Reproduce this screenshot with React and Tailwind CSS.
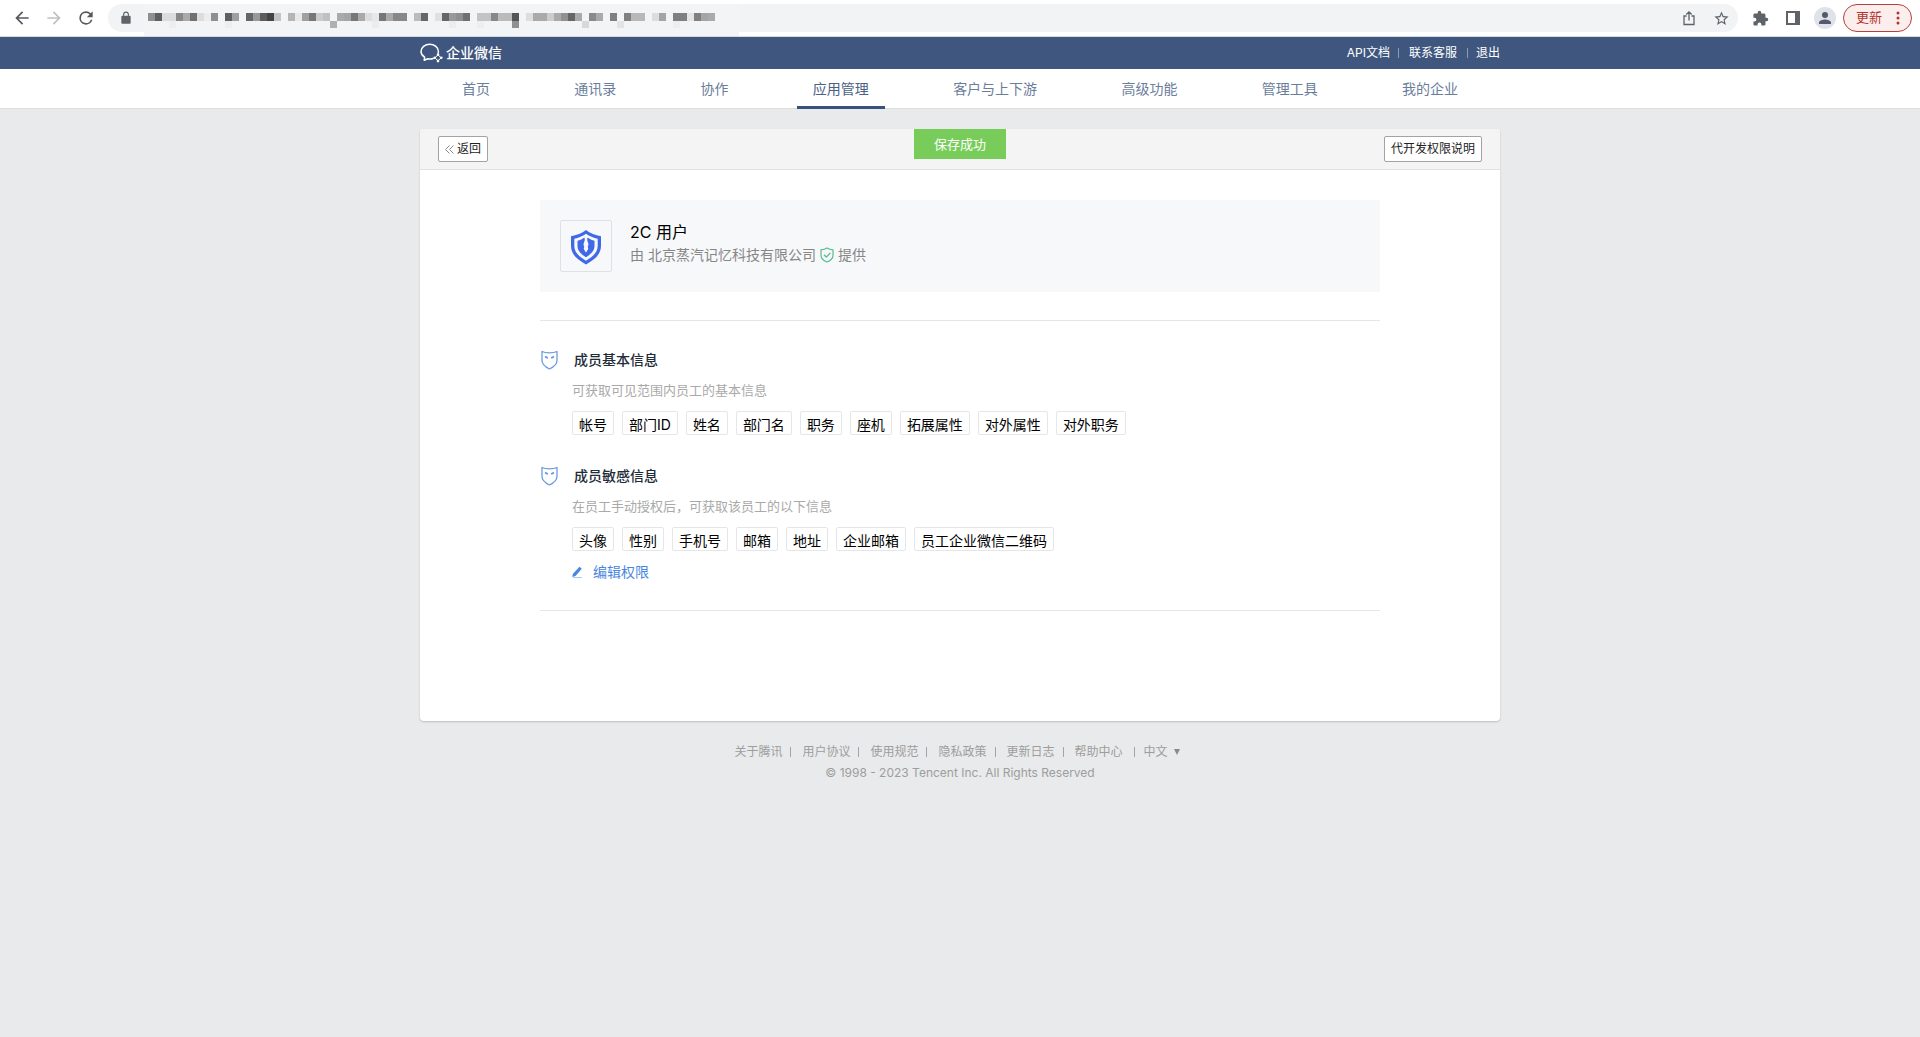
import { useState } from "react";

const URL_ROW =
  "8f 5e dc dc 88 aa 70 dd ed 8f .. 60 a0 .. 66 99 5c 44 c4 .. b5 e8 a0 77 cc c0 .. aa a5 77 aa dd e8 77 aa 88 88 .. bb 66 .. e0 66 99 8f 70 .. c4 c4 88 bb bb 55 .. dd aa aa cc aa 90 66 aa .. 8a aa .. 80 .. 80 b8 b8 .. dd a5 .. 80 80 e4 80 a5 aa".split(" ");
const URL_LOWER = { 3: "ee", 11: "ee", 26: "b0", 32: "ec", 43: "ed", 47: "ee", 52: "90", 62: "d8", 67: "e4", 75: "ee" };

const NAV = ["首页", "通讯录", "协作", "应用管理", "客户与上下游", "高级功能", "管理工具", "我的企业"];

const SECTIONS = [
  {
    title: "成员基本信息",
    desc: "可获取可见范围内员工的基本信息",
    tags: ["帐号", "部门ID", "姓名", "部门名", "职务", "座机", "拓展属性", "对外属性", "对外职务"],
  },
  {
    title: "成员敏感信息",
    desc: "在员工手动授权后，可获取该员工的以下信息",
    tags: ["头像", "性别", "手机号", "邮箱", "地址", "企业邮箱", "员工企业微信二维码"],
    editable: true,
  },
];

const FOOTER = ["关于腾讯", "用户协议", "使用规范", "隐私政策", "更新日志", "帮助中心"];

function MaskedUrl() {
  return (
    <svg width="567" height="15" viewBox="0 0 567 15" shapeRendering="crispEdges" aria-hidden="true">
      {URL_ROW.map((c, i) =>
        c === ".." ? null : <rect key={i} x={i * 7} y="0" width="7" height="8" fill={`#${c}${c}${c}`} />
      )}
      {Object.entries(URL_LOWER).map(([i, c]) => (
        <rect key={i} x={i * 7} y="8" width="7" height="7" fill={`#${c}${c}${c}`} />
      ))}
    </svg>
  );
}

function Glyph({ d, size = 18, className = "text-[#5f6368]" }) {
  return (
    <svg width={size} height={size} viewBox="0 0 24 24" fill="currentColor" className={className} aria-hidden="true">
      <path d={d} />
    </svg>
  );
}

function BrowserBar() {
  return (
    <div className="flex h-[37px] items-center border-b border-[#d5dbe3] bg-white pr-2 pl-3">
      <button aria-label="后退" className="mr-3 flex">
        <Glyph size={20} className="text-[#55585c]" d="M20 11H7.8l5.6-5.6L12 4l-8 8 8 8 1.4-1.4L7.8 13H20z" />
      </button>
      <button aria-label="前进" className="mr-3 flex">
        <Glyph size={20} className="text-[#bfc1c4]" d="M4 11h12.2l-5.6-5.6L12 4l8 8-8 8-1.4-1.4 5.6-5.6H4z" />
      </button>
      <button aria-label="刷新" className="mr-3 flex">
        <Glyph
          size={20}
          className="text-[#55585c]"
          d="M17.65 6.35A7.96 7.96 0 0 0 12 4a8 8 0 1 0 7.73 10h-2.08A6 6 0 1 1 12 6c1.66 0 3.14.69 4.22 1.78L13 11h7V4z"
        />
      </button>
      <div className="flex h-7 flex-1 items-center rounded-full bg-[#f1f3f4] pr-2 pl-[11px]">
        <Glyph
          size={14}
          d="M18 8h-1V6A5 5 0 0 0 7 6v2H6a2 2 0 0 0-2 2v10c0 1.100.9 2 2 2h12a2 2 0 0 0 2-2V10a2 2 0 0 0-2-2zM8.900 6a3.100 3.100 0 0 1 6.200 0v2H8.900z"
        />
        <div className="mr-auto ml-[11px] h-8 w-[595px] self-start bg-[#f3f4f5] pt-[9px] pl-1">
          <MaskedUrl />
        </div>
        <button aria-label="分享" className="mr-4 flex">
          <svg width="16" height="16" viewBox="0 0 16 16" fill="none" stroke="#5f6368" strokeWidth="1.3" aria-hidden="true">
            <path d="M5.500 6H3v8.500h10V6h-2.500M8 10.500V2M5.300 4.500L8 1.800l2.700 2.700" />
          </svg>
        </button>
        <button aria-label="收藏" className="flex">
          <Glyph
            size={17}
            d="M22 9.240l-7.190-.62L12 2 9.190 8.630 2 9.240l5.460 4.730L5.820 21 12 17.270 18.180 21l-1.630-7.030zM12 15.400l-3.760 2.270 1-4.280-3.320-2.880 4.380-.38L12 6.100l1.710 4.040 4.380.38-3.320 2.880 1 4.280z"
          />
        </button>
      </div>
      <button aria-label="扩展程序" className="ml-3.5 flex">
        <Glyph
          size={17}
          d="M20.500 11H19V7a2 2 0 0 0-2-2h-4V3.500a2.500 2.500 0 0 0-5 0V5H4a2 2 0 0 0-2 2v3.800h1.500a2.700 2.700 0 0 1 0 5.400H2V20a2 2 0 0 0 2 2h3.800v-1.500a2.700 2.700 0 0 1 5.400 0V22H17a2 2 0 0 0 2-2v-4h1.500a2.500 2.500 0 0 0 0-5z"
        />
      </button>
      <button aria-label="侧边栏" className="ml-4 flex">
        <svg width="16" height="16" viewBox="0 0 16 16" aria-hidden="true">
          <path fill="#5f6368" fillRule="evenodd" d="M1 1h14v14H1zM3 3v10h7V3z" />
        </svg>
      </button>
      <button aria-label="个人资料" className="ml-[13px] flex size-[22px] items-center justify-center rounded-full bg-[#dfe2e8]">
        <Glyph
          size={18}
          className="text-[#535b6b]"
          d="M12 12a4 4 0 1 0 0-8 4 4 0 0 0 0 8zm0 2c-2.670 0-8 1.340-8 4v2h16v-2c0-2.660-5.330-4-8-4z"
        />
      </button>
      <button className="ml-[7px] flex h-7 w-[69px] items-center justify-between rounded-full border border-[#b3403a] bg-[#fceeed] pr-[11px] pl-3 text-[13px] text-[#b3342e]">
        更新
        <svg width="4" height="14" viewBox="0 0 4 14" fill="#b3342e" aria-hidden="true">
          <circle cx="2" cy="2" r="1.500" />
          <circle cx="2" cy="7" r="1.500" />
          <circle cx="2" cy="12" r="1.500" />
        </svg>
      </button>
    </div>
  );
}

function WeComLogo() {
  return (
    <svg width="24" height="20" viewBox="0 0 24 20" fill="none" stroke="#fff" aria-hidden="true">
      <path
        strokeWidth="1.500"
        strokeLinejoin="round"
        strokeLinecap="round"
        d="M13.200 15.500c-1.500.5-3.700.7-5.400.2L4.200 17.300l.4-3.100C2.400 12.700 1 10.700 1 8.400 1 4.400 4.900 1.300 9.700 1.300s8.700 3.100 8.700 7.100c0 .7-.1 1.300-.3 1.900"
      />
      <path strokeWidth="1" d="M18 11.800l3 3-3 3-3-3z" />
      <g fill="#fff" stroke="none">
        <circle cx="18" cy="11.800" r="1.300" />
        <circle cx="21.300" cy="14.800" r="1.300" />
        <circle cx="18" cy="18.100" r="1.300" />
        <circle cx="14.700" cy="14.800" r="1.300" />
      </g>
    </svg>
  );
}

function MaskIcon() {
  return (
    <svg width="18" height="20" viewBox="0 0 18 20" fill="none" stroke="#6d9ae0" strokeWidth="1.300" strokeLinejoin="round" aria-hidden="true">
      <path d="M2 1.500c2.300 1.200 4.800 1.400 7.500 1.400s5.200-.2 7.500-1.400v8.800c0 4-3.500 6.800-7.500 8.700C5.500 17.100 2 14.300 2 10.300z" />
      <path strokeWidth="1.800" d="M5 6.500l2.800 1.600M14 6.500l-2.800 1.600" />
    </svg>
  );
}

function AppShield() {
  return (
    <svg width="32" height="36" viewBox="0 0 32 36" aria-hidden="true">
      <path
        d="M16 1C12 4 6.500 6.500 1 7.200V17c0 8 6 13.500 15 18.500 9-5 15-10.500 15-18.500V7.200C25.500 6.500 20 4 16 1z"
        fill="#4168e8"
      />
      <path
        d="M16 4.800c-3.500 2.400-7.500 4.200-11.700 5V17c0 6.300 4.700 10.500 11.700 14.700 7-4.200 11.700-8.400 11.700-14.700V9.800c-4.200-.8-8.200-2.600-11.700-5z"
        fill="#f7f8fa"
      />
      <path
        d="M14.300 8.500c-1.500 1.300-4.500 2.700-6.800 3.300V17c0 4.700 3.600 8 8.500 11.300 4.900-3.300 8.500-6.600 8.500-11.300v-5.200c-2.300-.6-5.300-2-6.800-3.300-.9 1.800-.4 3.600.4 5.200.7 1.500.3 3-.6 4.200.6 1 .6 2.200-.2 3.100L16 23l-1.300-2c-.8-.9-.8-2.100-.2-3.100-.9-1.200-1.300-2.700-.6-4.200.8-1.600 1.300-3.400.4-5.200z"
        fill="#4168e8"
      />
      <path d="M16 14.500l-2.300 5.200L16 23.500l2.300-3.800z" fill="#f7f8fa" />
    </svg>
  );
}

export default function App() {
  const [active, setActive] = useState("应用管理");
  return (
    <div className="min-h-screen bg-[#e9eaeb] font-[Inter,'Noto_Sans_CJK_SC',sans-serif]">
      <BrowserBar />
      <header>
        <div className="bg-[#3f577f]">
          <div className="mx-auto flex h-8 max-w-[1080px] items-center justify-between text-white">
            <a href="#" className="flex items-center gap-0.5 text-sm leading-5 font-medium">
              <WeComLogo />
              企业微信
            </a>
            <div className="flex items-center gap-2 text-xs">
              <a href="#">API文档</a>
              <span className="h-2.5 w-px bg-[#8c9ab2]" />
              <a href="#" className="ml-0.5">联系客服</a>
              <span className="ml-0.5 h-2.5 w-px bg-[#8c9ab2]" />
              <a href="#">退出</a>
            </div>
          </div>
        </div>
        <div className="border-b border-[#dcdddf] bg-white">
          <nav className="mx-auto -mb-px flex h-10 max-w-[1080px] justify-between px-[26px] text-sm leading-10">
            {NAV.map((n) => (
              <a
                key={n}
                href="#"
                onClick={() => setActive(n)}
                className={
                  n === active ? "border-b-3 border-[#39527c] px-4 text-[#4a6186]" : "px-4 text-[#6a7d9b]"
                }
              >
                {n}
              </a>
            ))}
          </nav>
        </div>
      </header>

      <main className="mx-auto mt-5 max-w-[1080px] rounded bg-white pb-[110px] shadow-[0_1px_2px_rgba(0,0,0,0.2)]">
        <div className="relative flex h-[41px] items-center justify-between rounded-t border-b border-[#e1e2e3] bg-[#f4f4f4] px-[18px] text-xs text-[#222]">
          <button className="flex h-[26px] items-center gap-[3px] rounded-xs border border-[#a3a3a3] bg-white px-1.5">
            <svg width="9" height="9" viewBox="0 0 9 9" fill="none" stroke="#888" aria-hidden="true">
              <path d="M4.500.5l-4 4 4 4M8.500.5l-4 4 4 4" />
            </svg>
            返回
          </button>
          <div role="status" className="absolute top-0 left-1/2 h-[30px] -translate-x-1/2 bg-[#78cd5a] px-5 text-[13px] leading-[30px] text-white">
            保存成功
          </div>
          <button className="h-[26px] rounded-xs border border-[#a3a3a3] bg-white px-1.5">代开发权限说明</button>
        </div>

        <div className="mx-[120px] mt-[30px]">
          <div className="flex gap-[18px] bg-[#f7f8fa] p-5">
            <div className="flex size-[52px] items-center justify-center rounded-xs border border-[#dfe1e6] pt-px">
              <AppShield />
            </div>
            <div>
              <h1 className="text-base leading-6 text-black">2C 用户</h1>
              <p className="flex items-center text-sm leading-[22px] text-[#868686]">
                由 北京蒸汽记忆科技有限公司
                <svg width="14" height="16" viewBox="0 0 14 16" fill="none" stroke="#54bd8c" strokeWidth="1.200" strokeLinejoin="round" className="mr-1 ml-1" aria-hidden="true">
                  <path d="M7 1c1.800 1.200 3.800 1.700 6 1.800v5.400c0 3.300-2.700 5.500-6 6.800-3.300-1.300-6-3.500-6-6.800V2.800C3.200 2.700 5.200 2.200 7 1z" />
                  <path d="M4 7.800l2.300 2.200 4-4" />
                </svg>
                提供
              </p>
            </div>
          </div>

          <div className="mt-7 border-y border-[#e4e6e9] pt-7 pb-[27px]">
            {SECTIONS.map((s) => (
              <section key={s.title} className="mb-[30px] last:mb-0">
                <div className="flex items-center gap-4">
                  <MaskIcon />
                  <h2 className="text-sm leading-[22px] font-medium text-[#222b38]">{s.title}</h2>
                </div>
                <div className="ml-8">
                  <p className="mt-[9px] text-[13px] leading-5 text-[#a9a9a9]">{s.desc}</p>
                  <ul className="mt-[11px] flex flex-wrap gap-2">
                    {s.tags.map((t) => (
                      <li key={t} className="h-6 rounded-xs border border-[#e4e6e9] px-1.5 pt-0.5 text-sm leading-[22px] text-black">
                        {t}
                      </li>
                    ))}
                  </ul>
                  {s.editable && (
                    <a href="#" className="mt-2.5 flex items-center text-sm leading-[22px] text-[#4a86e0]">
                      <svg width="11" height="12" viewBox="0 0 11 12" aria-hidden="true" className="mr-2.5">
                        <path fill="#4a86e0" d="M7.500.8l2.300 1.900-6.300 7.200-3.300 1 .8-3.100z" />
                        <path stroke="#a9c6f1" d="M1 11.500h9" />
                      </svg>
                      编辑权限
                    </a>
                  )}
                </div>
              </section>
            ))}
          </div>
        </div>
      </main>

      <footer className="mt-5 text-center text-xs leading-[21px] text-[#9d9d9d]">
        <div className="flex items-center justify-center pr-1.5">
          {FOOTER.map((f) => (
            <span key={f} className="group flex items-center">
              <a href="#">{f}</a>
              <span className="mr-[11px] ml-2 h-2.5 w-px bg-[#a5a5a5] group-last-of-type:mr-[9px] group-last-of-type:ml-[11px]" />
            </span>
          ))}
          <button className="flex items-center gap-1.5">
            中文
            <svg width="6" height="6" viewBox="0 0 6 6" fill="#8a8a8a" aria-hidden="true">
              <path d="M0 0h6L3 6z" />
            </svg>
          </button>
        </div>
        <p>© 1998 - 2023 Tencent Inc. All Rights Reserved</p>
      </footer>
    </div>
  );
}
